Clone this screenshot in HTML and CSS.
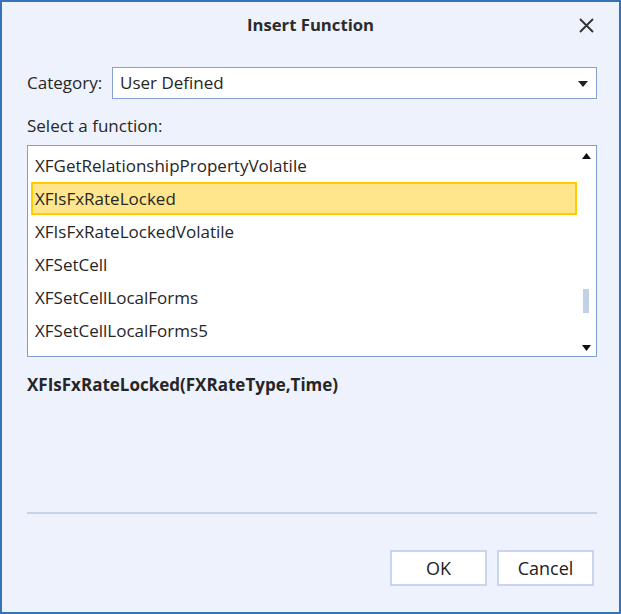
FILE: index.html
```html
<!DOCTYPE html>
<html>
<head>
<meta charset="utf-8">
<link rel="stylesheet" href="styles.css">
</head>
<body>
<div class="window">
  <div class="titlebar">
    <div class="title">Insert Function</div>
    <div class="close">
      <svg width="15" height="15" viewBox="0 0 15 15"><path d="M1 1 L14 14 M14 1 L1 14" stroke="#333" stroke-width="1.9" fill="none"/></svg>
    </div>
  </div>
  <div class="content">
    <div class="category-row">
      <span class="label">Category:</span>
      <div class="combo">
        <span class="combo-text">User Defined</span>
        <svg class="combo-arrow" width="10" height="6" viewBox="0 0 10 6"><path d="M0 0 L10 0 L5 6 Z" fill="#222"/></svg>
      </div>
    </div>
    <div class="select-label">Select a function:</div>
    <div class="listbox">
      <div class="items">
        <div class="item">XFGetRelationshipPropertyVolatile</div>
        <div class="item selected">XFIsFxRateLocked</div>
        <div class="item">XFIsFxRateLockedVolatile</div>
        <div class="item">XFSetCell</div>
        <div class="item">XFSetCellLocalForms</div>
        <div class="item">XFSetCellLocalForms5</div>
      </div>
      <div class="scrollbar">
        <svg class="arrow" width="9" height="6" viewBox="0 0 9 6"><path d="M4.5 0 L9 6 L0 6 Z" fill="#111"/></svg>
        <div class="track"><div class="thumb" style="top: 130px;"></div></div>
        <svg class="arrow" width="9" height="6" viewBox="0 0 9 6"><path d="M0 0 L9 0 L4.5 6 Z" fill="#111"/></svg>
      </div>
    </div>
    <div class="formula">XFIsFxRateLocked(FXRateType,Time)</div>
    <div class="separator"></div>
    <div class="buttons">
      <button class="btn">OK</button>
      <button class="btn">Cancel</button>
    </div>
  </div>
</div>
</body>
</html>
```
FILE: styles.css
```css
html, body {
  margin: 0;
  padding: 0;
}
body {
  font-family: "Open Sans", "Noto Sans", sans-serif;
  color: #262626;
}
.window {
  width: 621px;
  height: 614px;
  box-sizing: border-box;
  border: 2px solid #3673b9;
  background: #eef2fc;
}
.titlebar {
  height: 46px;
  display: grid;
  grid-template-columns: 1fr auto 1fr;
  align-items: center;
}
.title {
  grid-column: 2;
  font-weight: 700;
  font-size: 16.7px;
  line-height: 20px;
  color: #2b2b2b;
}
.close {
  grid-column: 3;
  justify-self: end;
  margin-right: 25px;
  width: 15px;
  height: 15px;
  display: flex;
}
.content {
  padding: 0 22px 0 25px;
}
.category-row {
  margin-top: 19px;
  display: flex;
  align-items: center;
  height: 32px;
}
.label {
  font-size: 17px;
  width: 85px;
  line-height: 20px;
}
.combo {
  flex: 1;
  height: 32px;
  box-sizing: border-box;
  border: 1px solid #85a2d3;
  background: #fff;
  display: flex;
  align-items: center;
  padding: 0 7px 0 7px;
}
.combo-text {
  flex: 1;
  font-size: 17px;
  line-height: 20px;
}
.combo-arrow {
  margin-right: 1px;
  margin-top: 1px;
}
.select-label {
  font-size: 17px;
  line-height: 20px;
  margin-top: 17px;
  margin-bottom: 9px;
}
.listbox {
  height: 212px;
  box-sizing: border-box;
  border: 1px solid #7f9dd0;
  background: #fff;
  display: flex;
}
.items {
  flex: 1;
  padding: 3px 0 0 3px;
}
.item {
  height: 33px;
  box-sizing: border-box;
  padding-left: 2px;
  display: flex;
  align-items: center;
  font-size: 17px;
  border: 2px solid transparent;
}
.item.selected {
  background: #ffe68c;
  border-color: #ffcc00;
}
.scrollbar {
  width: 19px;
  display: flex;
  flex-direction: column;
  align-items: center;
  padding: 7px 0 5px 0;
}
.arrow {
  display: block;
}
.track {
  flex: 1;
  width: 100%;
  position: relative;
}
.thumb {
  position: absolute;
  left: 6px;
  width: 6px;
  height: 24px;
  background: #c2d0ea;
}
.formula {
  font-weight: 700;
  font-size: 17px;
  line-height: 20px;
  margin-top: 18px;
}
.separator {
  height: 2px;
  background: #c6d3ea;
  margin-top: 117px;
}
.buttons {
  margin-top: 36px;
  display: flex;
  justify-content: flex-end;
  gap: 10px;
  padding-right: 3px;
}
.btn {
  width: 97px;
  height: 36px;
  box-sizing: border-box;
  border: 2px solid #c8d5ec;
  background: #fff;
  font-family: "Open Sans", "Noto Sans", sans-serif;
  font-size: 18px;
  color: #222;
  padding: 0;
}
```
